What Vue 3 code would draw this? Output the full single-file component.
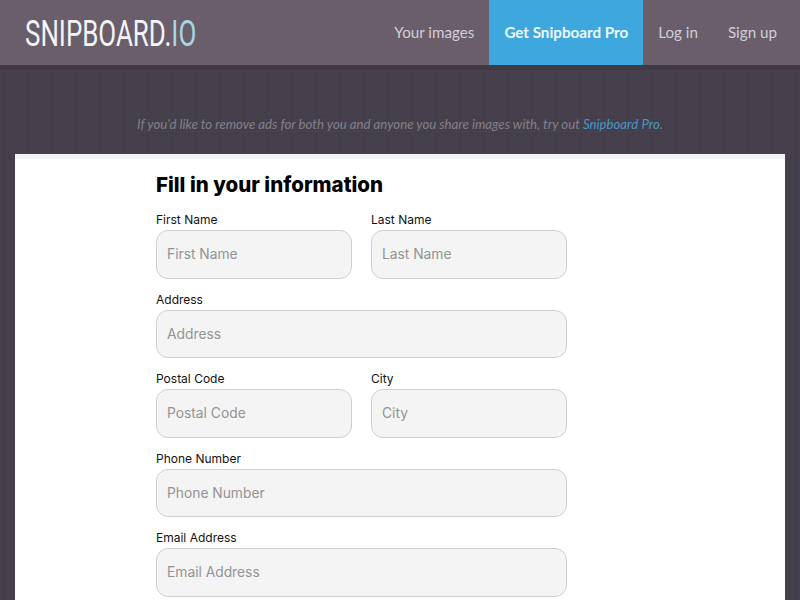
<template>
  <div class="page">
    <header class="topbar">
      <div class="logo">SNIPBOARD<span class="dot">.</span><span class="io">IO</span></div>
      <nav class="nav">
        <a v-for="link in links" :key="link.label" class="nav-link" :class="{ pro: link.pro }">{{ link.label }}</a>
      </nav>
    </header>

    <p class="notice">
      If you'd like to remove ads for both you and anyone you share images with, try out
      <span class="notice-link">Snipboard Pro</span>.
    </p>

    <main class="shot">
      <div class="form">
        <h1 class="title">Fill in your information</h1>
        <div class="fields">
          <div v-for="field in fields" :key="field.label" class="field" :class="{ wide: field.wide }">
            <label class="label">{{ field.label }}</label>
            <div class="input">{{ field.label }}</div>
          </div>
        </div>
      </div>
    </main>
  </div>
</template>

<script setup>
const links = [
  { label: 'Your images' },
  { label: 'Get Snipboard Pro', pro: true },
  { label: 'Log in' },
  { label: 'Sign up' },
];

const fields = [
  { label: 'First Name' },
  { label: 'Last Name' },
  { label: 'Address', wide: true },
  { label: 'Postal Code' },
  { label: 'City' },
  { label: 'Phone Number', wide: true },
  { label: 'Email Address', wide: true },
];
</script>

<style>
html,
body {
  margin: 0;
  overflow: hidden;
  background: #443f4b;
}
</style>

<style scoped>
.page {
  width: 800px;
  height: 600px;
  overflow: hidden;
  background-color: #443f4b;
  background-image:
    repeating-linear-gradient(90deg, rgba(255, 255, 255, 0.01) 0 1px, transparent 1px 6px),
    repeating-linear-gradient(0deg, rgba(255, 255, 255, 0.01) 0 1px, transparent 1px 6px);
  font-family: Lato, "Liberation Sans", sans-serif;
}

.topbar {
  display: flex;
  justify-content: space-between;
  height: 65px;
  padding-left: 25px;
  background: #695e6a;
  border-bottom: 5px solid #3f3a46;
}

/* no condensed face installed, so squeeze a regular one */
.logo {
  font-family: Roboto, "Liberation Sans", sans-serif;
  font-weight: 400;
  font-size: 37px;
  line-height: 68px;
  color: #f3f3f8;
  white-space: nowrap;
  transform: scaleX(0.7);
  transform-origin: left center;
}

.dot {
  color: #f3f3f8;
}

.io {
  color: #a9d6e2;
}

.nav {
  display: flex;
  padding-right: 8px;
}

.nav-link {
  padding: 0 15px;
  font-size: 15.2px;
  line-height: 65px;
  color: #d3cfd6;
}

.nav-link.pro {
  background: #3ea8de;
  color: #eef8fd;
  font-weight: 700;
}

.notice {
  margin: 0;
  padding-top: 45px;
  height: 39px;
  text-align: center;
  font-size: 13.2px;
  line-height: 18px;
  font-style: italic;
  color: #85808a;
}

.notice-link {
  color: #4699c6;
}

.shot {
  margin: 0 15px;
  height: 446px;
  background: #fff;
  border-top: 5px solid #f4f4f6;
}

.form {
  width: 411px;
  margin-left: 141px;
  color: #000;
  font-family: Inter, "Noto Sans", sans-serif;
}

.title {
  margin: 0;
  padding-top: 14px;
  font-size: 20.5px;
  line-height: 24px;
  font-weight: 800;
}

.fields {
  display: grid;
  grid-template-columns: 196px 196px;
  column-gap: 19px;
  row-gap: 13px;
  margin-top: 15px;
}

.field.wide {
  grid-column: 1 / 3;
}

.label {
  display: block;
  font-size: 12px;
  line-height: 15px;
  margin-bottom: 3px;
  color: #111;
}

.input {
  box-sizing: border-box;
  height: 48.5px;
  padding-left: 10px;
  border: 1px solid #cfcfcf;
  border-radius: 12px;
  background: #f4f4f4;
  font-size: 13.8px;
  line-height: 46.5px;
  color: #939393;
}
</style>
